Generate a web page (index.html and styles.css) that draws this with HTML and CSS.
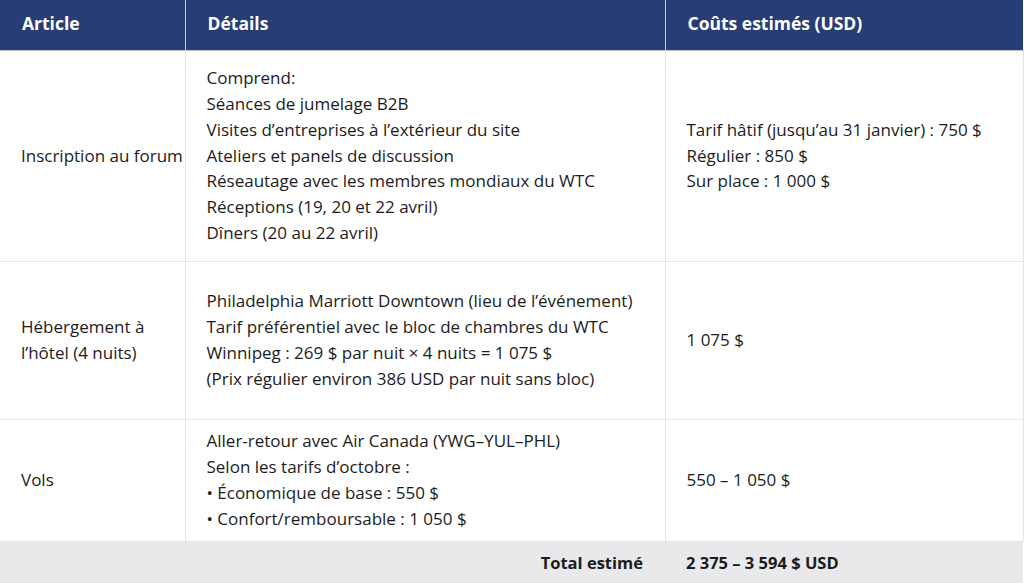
FILE: index.html
```html
<!DOCTYPE html>
<html lang="fr">
<head>
<meta charset="utf-8">
<link rel="stylesheet" href="styles.css">
</head>
<body>
<table class="costs">
  <colgroup>
    <col class="c1">
    <col class="c2">
    <col class="c3">
  </colgroup>
  <thead>
    <tr>
      <th>Article</th>
      <th>Détails</th>
      <th>Coûts estimés (USD)</th>
    </tr>
  </thead>
  <tbody>
    <tr class="r1">
      <td>Inscription au forum</td>
      <td>Comprend:<br>Séances de jumelage B2B<br>Visites d’entreprises à l’extérieur du site<br>Ateliers et panels de discussion<br>Réseautage avec les membres mondiaux du WTC<br>Réceptions (19, 20 et 22 avril)<br>Dîners (20 au 22 avril)</td>
      <td>Tarif hâtif (jusqu’au 31 janvier) : 750 $<br>Régulier : 850 $<br>Sur place : 1 000 $</td>
    </tr>
    <tr class="r2">
      <td>Hébergement à<br>l’hôtel (4 nuits)</td>
      <td>Philadelphia Marriott Downtown (lieu de l’événement)<br>Tarif préférentiel avec le bloc de chambres du WTC<br>Winnipeg : 269 $ par nuit × 4 nuits = 1 075 $<br>(Prix régulier environ 386 USD par nuit sans bloc)</td>
      <td>1 075 $</td>
    </tr>
    <tr class="r3">
      <td>Vols</td>
      <td>Aller-retour avec Air Canada (YWG–YUL–PHL)<br>Selon les tarifs d’octobre :<br>• Économique de base : 550 $<br>• Confort/remboursable : 1 050 $</td>
      <td>550 – 1 050 $</td>
    </tr>
    <tr class="total">
      <td></td>
      <td class="total-label">Total estimé</td>
      <td>2 375 – 3 594 $ USD</td>
    </tr>
  </tbody>
</table>
</body>
</html>
```

FILE: styles.css
```css
html, body {
  margin: 0;
  padding: 0;
  background: #ffffff;
}

.costs {
  width: 1023px;
  border-collapse: collapse;
  table-layout: fixed;
  font-family: "Open Sans", "Liberation Sans", sans-serif;
  font-size: 17px;
  line-height: 25.8px;
  color: #1c1c1c;
}

.c1 { width: 185px; }
.c2 { width: 480px; }
.c3 { width: 358px; }

.costs th {
  background: #273d73;
  color: #ffffff;
  font-weight: 700;
  font-size: 17.5px;
  text-align: left;
  height: 50px;
  padding: 0 0 1px 22px;
  box-sizing: border-box;
  border-left: 1px solid #c9cfdf;
  border-bottom: 1px solid #b9c1d8;
  vertical-align: middle;
}

.costs th:first-child {
  border-left: none;
}

.costs td {
  padding: 0 0 0 21px;
  vertical-align: middle;
  border-left: 1px solid #e6e6e6;
  border-bottom: 1px solid #e6e6e6;
  white-space: nowrap;
}

.costs td:first-child {
  border-left: none;
}

.costs td:last-child {
  border-right: 1px solid #e6e6e6;
}

.r1 td { height: 210px; }
.r2 td { height: 157px; }
.r3 td { height: 121px; }

.costs .total td {
  background: #e9e9eb;
  border: none;
  font-weight: 700;
  font-size: 16.5px;
  height: 43px;
}

.costs .total-label {
  text-align: right;
  padding: 0 22px 0 0;
}
```
